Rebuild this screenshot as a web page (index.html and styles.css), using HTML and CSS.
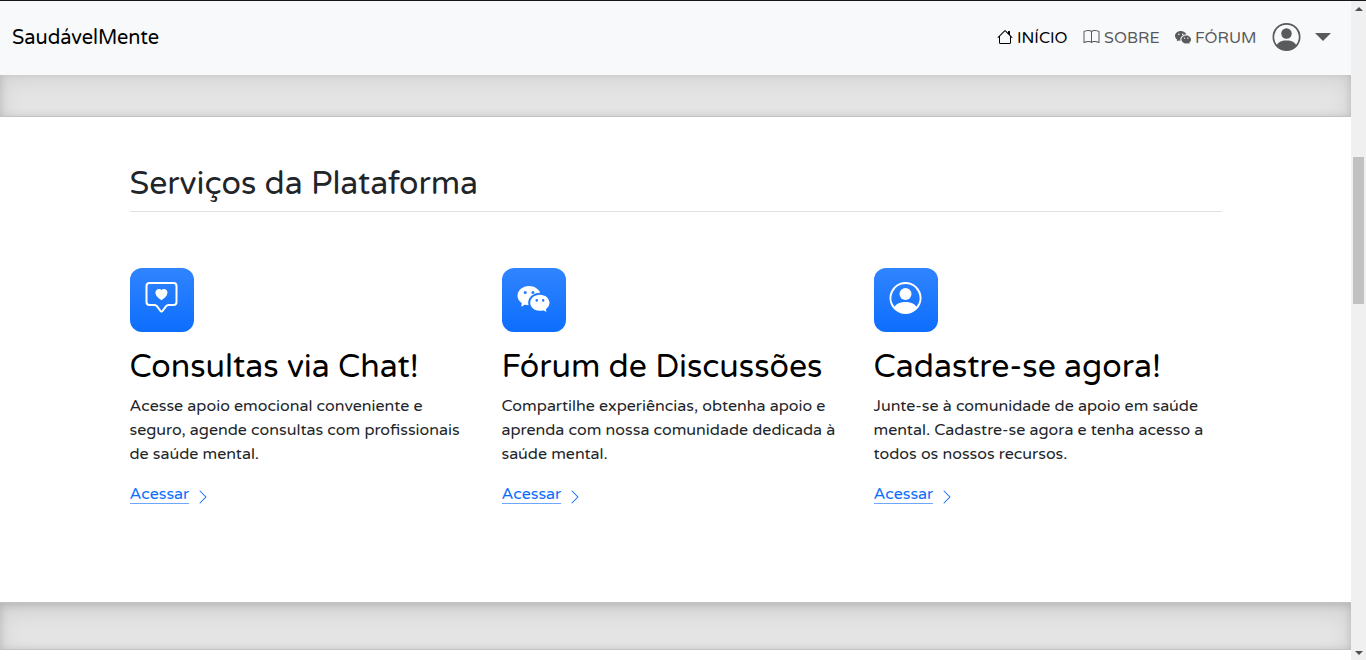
FILE: index.html
```html
<!DOCTYPE html>
<html lang="pt-BR">
<head>
<meta charset="utf-8">
<title>SaudávelMente</title>
<link rel="stylesheet" href="styles.css">
</head>
<body>
<svg class="sprite" aria-hidden="true">
  <symbol id="house" viewBox="0 0 16 16"><path d="M8.707 1.5a1 1 0 0 0-1.414 0L.646 8.146a.5.5 0 0 0 .708.708L2 8.207V13.5A1.5 1.5 0 0 0 3.5 15h9a1.5 1.5 0 0 0 1.5-1.5V8.207l.646.647a.5.5 0 0 0 .708-.708L13 5.793V2.5a.5.5 0 0 0-.5-.5h-1a.5.5 0 0 0-.5.5v1.293L8.707 1.5ZM13 7.207V13.5a.5.5 0 0 1-.5.5h-9a.5.5 0 0 1-.5-.5V7.207l5-5 5 5Z"/></symbol>
  <symbol id="book" viewBox="0 0 16 16"><path d="M1 2.828c.885-.37 2.154-.769 3.388-.893 1.33-.134 2.458.063 3.112.752v9.746c-.935-.53-2.12-.603-3.213-.493-1.18.12-2.37.461-3.287.811V2.828zm7.5-.141c.654-.689 1.782-.886 3.112-.752 1.234.124 2.503.523 3.388.893v9.923c-.918-.35-2.107-.692-3.287-.81-1.094-.111-2.278-.039-3.213.492V2.687zM8 1.783C7.015.936 5.587.81 4.287.94c-1.514.153-3.042.672-3.994 1.105A.5.5 0 0 0 0 2.5v11a.5.5 0 0 0 .707.455c.882-.4 2.303-.881 3.68-1.02 1.409-.142 2.59.087 3.223.877a.5.5 0 0 0 .78 0c.633-.79 1.814-1.019 3.222-.877 1.378.139 2.8.62 3.681 1.02A.5.5 0 0 0 16 13.5v-11a.5.5 0 0 0-.293-.455c-.952-.433-2.48-.952-3.994-1.105C10.413.809 8.985.936 8 1.783z"/></symbol>
  <symbol id="bubbles" viewBox="0 0 16 16"><path d="M11.176 14.429c-2.665 0-4.826-1.8-4.826-4.018 0-2.22 2.159-4.02 4.824-4.02S16 8.191 16 10.411c0 1.21-.65 2.301-1.666 3.036a.324.324 0 0 0-.12.366l.218.81a.616.616 0 0 1 .029.117.166.166 0 0 1-.162.162.177.177 0 0 1-.092-.03l-1.057-.61a.519.519 0 0 0-.256-.074.509.509 0 0 0-.142.021 5.668 5.668 0 0 1-1.576.22ZM9.064 9.542a.647.647 0 1 0 .557-1 .645.645 0 0 0-.646.647.615.615 0 0 0 .09.353Zm3.232.001a.646.646 0 1 0 .546-1 .645.645 0 0 0-.644.644.627.627 0 0 0 .098.356Z"/><path d="M0 6.826c0 1.455.781 2.765 2.001 3.656a.385.385 0 0 1 .143.439l-.161.6-.1.373a.499.499 0 0 0-.032.14.192.192 0 0 0 .193.193c.039 0 .077-.01.111-.029l1.268-.733a.622.622 0 0 1 .308-.088c.058 0 .116.009.171.025a6.83 6.83 0 0 0 1.625.26 4.45 4.45 0 0 1-.177-1.251c0-2.936 2.785-5.02 5.824-5.02.05 0 .1 0 .15.002C10.587 3.429 8.392 2 5.796 2 2.596 2 0 4.16 0 6.826Zm4.632-1.555a.77.77 0 1 1-1.54 0 .77.77 0 0 1 1.54 0Zm3.875 0a.77.77 0 1 1-1.54 0 .77.77 0 0 1 1.54 0Z"/></symbol>
  <symbol id="person" viewBox="0 0 16 16"><path d="M11 6a3 3 0 1 1-6 0 3 3 0 0 1 6 0z"/><path fill-rule="evenodd" d="M0 8a8 8 0 1 1 16 0A8 8 0 0 1 0 8zm8-7a7 7 0 0 0-5.468 11.37C3.242 11.226 4.805 10 8 10s4.757 1.225 5.468 2.37A7 7 0 0 0 8 1z"/></symbol>
  <symbol id="heart-chat" viewBox="0 0 16 16"><path d="M14 1a1 1 0 0 1 1 1v8a1 1 0 0 1-1 1h-2.5a2 2 0 0 0-1.6.8L8 14.333 6.1 11.8a2 2 0 0 0-1.6-.8H2a1 1 0 0 1-1-1V2a1 1 0 0 1 1-1h12ZM2 0a2 2 0 0 0-2 2v8a2 2 0 0 0 2 2h2.5a1 1 0 0 1 .8.4l1.9 2.533a1 1 0 0 0 1.6 0l1.9-2.533a1 1 0 0 1 .8-.4H14a2 2 0 0 0 2-2V2a2 2 0 0 0-2-2H2Z"/><path d="M8 3.993c1.664-1.711 5.825 1.283 0 5.132-5.825-3.85-1.664-6.843 0-5.132Z"/></symbol>
  <symbol id="chevron" viewBox="0 0 16 16"><path d="M4.646 1.646a.5.5 0 0 1 .708 0l6 6a.5.5 0 0 1 0 .708l-6 6a.5.5 0 0 1-.708-.708L10.293 8 4.646 2.354a.5.5 0 0 1 0-.708z"/></symbol>
</svg>
<div class="window">
  <div class="page">
    <header class="navbar">
      <a class="brand">SaudávelMente</a>
      <nav class="nav">
        <a class="nav-link active"><svg><use href="#house"/></svg><span>INÍCIO</span></a>
        <a class="nav-link"><svg class="book"><use href="#book"/></svg><span>SOBRE</span></a>
        <a class="nav-link"><svg><use href="#bubbles"/></svg><span>FÓRUM</span></a>
        <a class="account"><svg><use href="#person"/></svg><i class="caret"></i></a>
      </nav>
    </header>
    <div class="divider-clip"><div class="divider"></div></div>
    <main class="services">
      <h2 class="heading">Serviços da Plataforma</h2>
      <div class="row">
        <section class="feature">
          <div class="tile"><svg><use href="#heart-chat"/></svg></div>
          <h3 class="title">Consultas via Chat!</h3>
          <p class="copy">Acesse apoio emocional conveniente e seguro, agende consultas com profissionais de saúde mental.</p>
          <a class="link"><span>Acessar</span><svg><use href="#chevron"/></svg></a>
        </section>
        <section class="feature">
          <div class="tile"><svg><use href="#bubbles"/></svg></div>
          <h3 class="title">Fórum de Discussões</h3>
          <p class="copy">Compartilhe experiências, obtenha apoio e aprenda com nossa comunidade dedicada à saúde mental.</p>
          <a class="link"><span>Acessar</span><svg><use href="#chevron"/></svg></a>
        </section>
        <section class="feature">
          <div class="tile"><svg><use href="#person"/></svg></div>
          <h3 class="title">Cadastre-se agora!</h3>
          <p class="copy">Junte-se à comunidade de apoio em saúde mental. Cadastre-se agora e tenha acesso a todos os nossos recursos.</p>
          <a class="link"><span>Acessar</span><svg><use href="#chevron"/></svg></a>
        </section>
      </div>
    </main>
    <div class="divider"></div>
  </div>
  <aside class="scrollbar"><i class="up"></i><i class="thumb"></i><i class="down"></i></aside>
</div>
</body>
</html>
```
FILE: styles.css
```css
* { box-sizing: border-box; }
body {
  margin: 0;
  background: #fff;
  color: #212529;
  font: 16px/24px "Varela Round", "Noto Sans", sans-serif;
}
svg { fill: currentColor; flex: none; }
.sprite { display: none; }
.window { display: flex; height: 660px; overflow: hidden; border-top: 1px solid #15151c; }
.page { width: 1351px; }

.navbar {
  display: flex;
  align-items: center;
  justify-content: space-between;
  height: 74px;
  padding: 0 20px 2px 12px;
  background: #f8f9fa;
}
.brand { padding-top: 2px; color: #000; font-size: 20px; line-height: 30px; }
.nav { display: flex; align-items: center; }
.nav-link { display: flex; align-items: center; gap: 4px; margin-right: 15.5px; color: #595a5b; white-space: nowrap; }
.nav-link.active { color: #000; }
.nav-link span { padding-top: 2px; }
.nav-link svg { width: 16px; height: 16px; }
.nav-link .book { width: 17px; }
.account { display: flex; align-items: center; gap: 14px; color: #595a5b; }
.account svg { width: 29px; height: 28px; }
.caret { border: 8px solid transparent; border-top-color: currentColor; border-bottom: 0; }

.divider-clip { display: flex; align-items: flex-end; height: 42px; overflow: hidden; }
.divider {
  flex: none;
  width: 100%;
  height: 48px;
  background: rgba(0, 0, 0, .1);
  border: solid rgba(0, 0, 0, .15);
  border-width: 1px 0;
  box-shadow: inset 0 8px 24px rgba(0, 0, 0, .1), inset 0 2px 8px rgba(0, 0, 0, .15);
}

.services { width: 1140px; height: 485px; margin: 0 auto; padding: 48px 24px; }
.heading {
  margin: 0;
  padding-bottom: 8px;
  border-bottom: 1px solid #dee2e6;
  font-size: 32px;
  font-weight: 400;
  line-height: 38.4px;
}
.row { display: grid; grid-template-columns: repeat(3, 348px); gap: 24px; padding-top: 56px; }
.tile {
  display: flex;
  justify-content: center;
  width: 64px;
  height: 64px;
  margin-bottom: 16px;
  padding-top: 14px;
  border-radius: 12px;
  color: #fff;
  background: linear-gradient(#3084ff, #0d6efd);
}
.tile svg { width: 33px; height: 32px; }
.title { margin: 0 0 7px; color: #000; font-size: 32px; font-weight: 400; line-height: 38.4px; }
.copy { margin: 0 0 16px; }
.link { display: flex; color: #0d6efd; }
.link span { height: 22px; border-bottom: 1px solid rgba(13, 110, 253, .6); }
.link svg { width: 16px; height: 16px; margin: 7px 0 0 6px; }

.scrollbar { display: flex; flex-direction: column; align-items: center; width: 15px; background: #f0f0f0; }
.up { margin-top: 6px; border: 4px solid transparent; border-bottom-color: #505050; border-top: 0; }
.thumb { width: 11px; height: 147px; margin-top: 146px; background: #c1c1c1; }
.down { margin: auto 0 5px; border: 4px solid transparent; border-top-color: #505050; border-bottom: 0; }
```
